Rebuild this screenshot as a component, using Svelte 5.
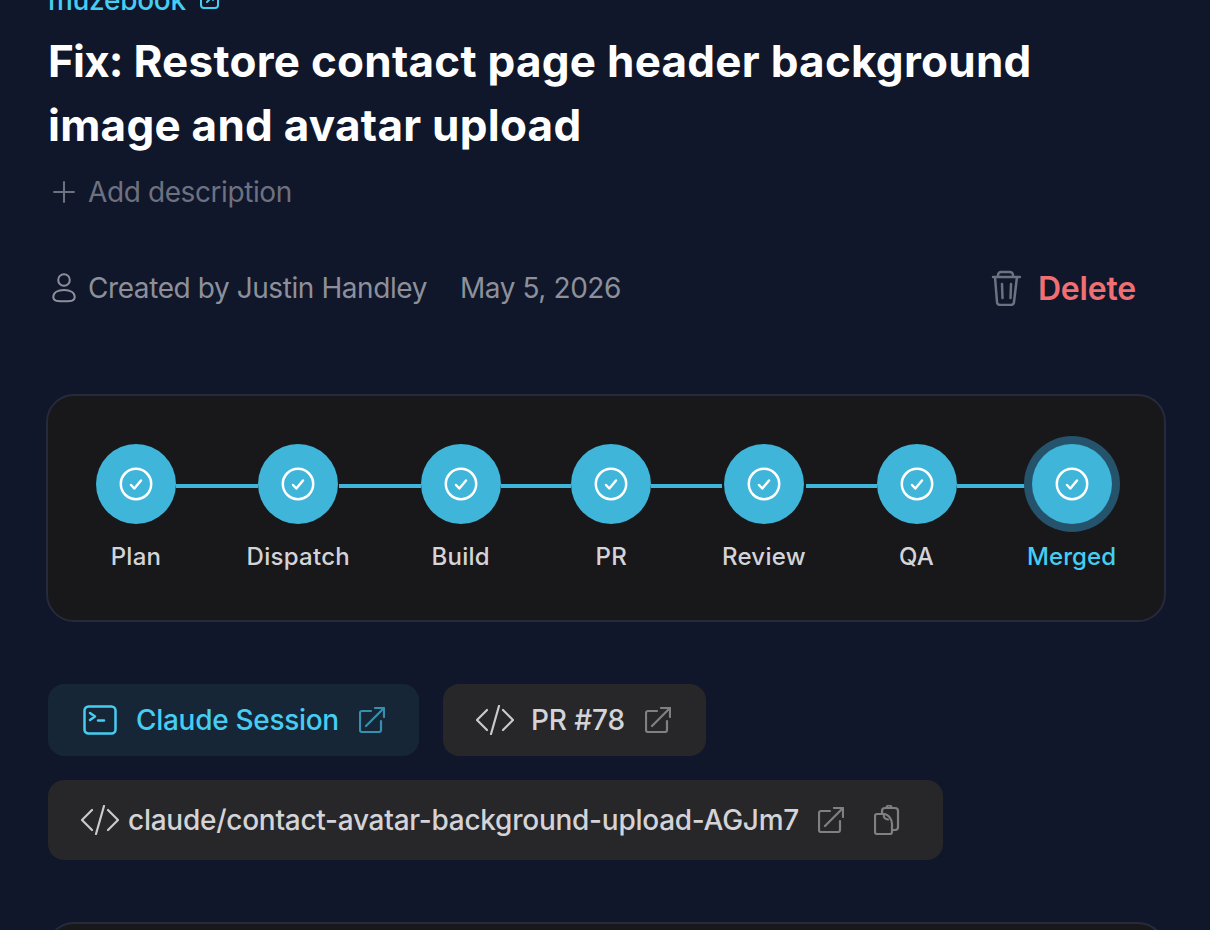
<script>
  const steps = [
    { label: 'Plan', over: 0 },
    { label: 'Dispatch', over: 11 },
    { label: 'Build', over: 0 },
    { label: 'PR', over: 0 },
    { label: 'Review', over: 0 },
    { label: 'QA', over: 0 },
    { label: 'Merged', over: 4, active: true }
  ];
</script>

{#snippet ext(cls)}
  <svg class={cls} width="26" height="26" viewBox="0 0 26 26" fill="none" stroke="currentColor" stroke-width="2.200" stroke-linecap="round" stroke-linejoin="round">
    <path d="M12 4H3a2 2 0 0 0-2 2v17a2 2 0 0 0 2 2h17a2 2 0 0 0 2-2v-9" />
    <path d="M7 19 25 1M16 1h9v9" />
  </svg>
{/snippet}

{#snippet code()}
  <svg class="code" width="38" height="30" viewBox="0 0 38 30" fill="none" stroke="currentColor" stroke-width="2.200" stroke-linecap="round" stroke-linejoin="round">
    <path d="M11 5 1 15l10 10M27 5l10 10-10 10M23 1l-8 28" />
  </svg>
{/snippet}

<main class="page">
  <a class="repo" href="#repo">
    <span>muzebook</span>
    <svg width="20" height="20" viewBox="0 0 20 20" fill="none" stroke="currentColor" stroke-width="2" stroke-linecap="round" stroke-linejoin="round">
      <rect x="1" y="1" width="17" height="17" rx="3" />
      <path d="M7 12 13 6M9 6h4v4" />
    </svg>
  </a>

  <h1><span class="fix">Fix:</span> Restore contact page header background<br />image and avatar upload</h1>

  <div class="add">
    <svg width="24" height="24" viewBox="0 0 24 24" fill="none" stroke="currentColor" stroke-width="2" stroke-linecap="round">
      <path d="M12 2v20M2 12h20" />
    </svg>
    <span>Add description</span>
  </div>

  <div class="meta">
    <svg class="person" width="24" height="30" viewBox="0 0 24 30" fill="none" stroke="currentColor" stroke-width="2">
      <circle cx="12" cy="7" r="5.800" />
      <path d="M1.300 24c0-4.500 4.500-7 10.700-7s10.700 2.500 10.700 7c0 2.500-1 3.200-3 3.700-2.300.4-5 .6-7.700.6s-5.400-.2-7.700-.6c-2-.5-3-1.200-3-3.700Z" />
    </svg>
    <span class="by">Created by Justin Handley</span>
    <span class="date">May 5, 2026</span>
    <div class="delete">
      <svg width="30" height="36" viewBox="0 0 30 36" fill="none" stroke="currentColor" stroke-width="2.500" stroke-linecap="round" stroke-linejoin="round">
        <path d="M2 7h27M7 7V5a3 3 0 0 1 3-3h9a3 3 0 0 1 3 3v2M4 7l2 25a3 3 0 0 0 3 3h11a3 3 0 0 0 3-3l3-25M11 14l.5 14M20 14l-.5 14" />
      </svg>
      <span>Delete</span>
    </div>
  </div>

  <section class="card stepper">
    {#each steps as s, i}
      {#if i > 0}
        <div class="gap">
          <div class="bar" style="margin-left:-{steps[i - 1].over}px;margin-right:-{s.over}px"></div>
        </div>
      {/if}
      <div class="step" class:active={s.active}>
        <div class="dot">
          <svg width="34" height="34" viewBox="0 0 34 34" fill="none" stroke="#fff" stroke-linecap="round" stroke-linejoin="round">
            <circle cx="17" cy="17" r="15.200" stroke-width="2.500" />
            <path d="M12 18l3.300 3.500 6.700-8" stroke-width="2.500" />
          </svg>
        </div>
        <div class="label">{s.label}</div>
      </div>
    {/each}
  </section>

  <div class="links">
    <a class="btn session" href="#session">
      <svg class="term" width="34" height="30" viewBox="0 0 34 30" fill="none" stroke="currentColor" stroke-width="2.500" stroke-linecap="round" stroke-linejoin="round">
        <rect x="1.500" y="1.500" width="31" height="27" rx="4" />
        <path d="M7 8l5 3.500-5 3.500M15 15.500h6" />
      </svg>
      <span>Claude Session</span>
      {@render ext('ext cyan')}
    </a>
    <a class="btn pr" href="#pr">
      {@render code()}
      <span>PR #78</span>
      {@render ext('ext')}
    </a>
  </div>

  <div class="btn branch">
    {@render code()}
    <span>claude/contact-avatar-background-upload-AGJm7</span>
    {@render ext('ext')}
    <svg class="copy" width="26" height="30" viewBox="0 0 26 30" fill="none" stroke="currentColor" stroke-width="2.200" stroke-linecap="round" stroke-linejoin="round">
      <path d="M8 8V6a3 3 0 0 1 3-3h1.500a2.500 2.500 0 0 1 5 0H21a3 3 0 0 1 3 3v16a3 3 0 0 1-3 3h-3" />
      <path d="M12.500 3h5" />
      <path d="M3 9h7c4 0 8 5 8 10v8a2 2 0 0 1-2 2H3a2 2 0 0 1-2-2V11a2 2 0 0 1 2-2Z" />
      <path d="M10 9c-1 3 .5 5 4 5.500" />
    </svg>
  </div>

  <section class="card next"></section>
</main>

<style>
  :global(body) {
    margin: 0;
    background: #10172a;
    overflow: hidden;
  }
  .page {
    height: 930px;
    overflow: hidden;
    box-sizing: border-box;
    padding: 0 44px 0 48px;
    font-family: Inter, "Liberation Sans", sans-serif;
  }
  a { text-decoration: none; }
  .repo {
    display: flex;
    align-items: center;
    gap: 14px;
    height: 40px;
    margin-top: -20px;
    color: #45cdf3;
    font-size: 28px;
    font-weight: 500;
    letter-spacing: -0.3px;
  }
  h1 {
    margin: 9px 0 0;
    color: #fff;
    font-size: 44px;
    line-height: 64px;
    font-weight: 700;
    letter-spacing: 0.26px;
  }
  .fix { letter-spacing: -0.8px; }
  .add {
    display: flex;
    align-items: center;
    gap: 12px;
    height: 40px;
    margin-top: 15px;
    padding-left: 4px;
    color: #6e7180;
    font-size: 28px;
    letter-spacing: -0.4px;
  }
  .meta {
    display: flex;
    align-items: center;
    height: 40px;
    margin-top: 56px;
    padding-left: 4px;
    color: #8d909b;
    font-size: 28px;
    letter-spacing: -0.42px;
  }
  .person { margin-right: 12px; }
  .date { margin-left: 33px; }
  .delete {
    display: flex;
    align-items: center;
    gap: 17px;
    margin-left: auto;
    padding-right: 30px;
    color: #6b7280;
  }
  .delete span {
    color: #f06f72;
    font-size: 32px;
    font-weight: 600;
    letter-spacing: -0.2px;
  }
  .card {
    margin-left: -2px;
    box-sizing: border-box;
    background: #18181b;
    border: 2px solid #262a3a;
    border-radius: 28px;
  }
  .stepper {
    display: flex;
    align-items: flex-start;
    margin-top: 86px;
    padding: 48px;
  }
  .step {
    display: flex;
    flex-direction: column;
    align-items: center;
    min-width: 80px;
  }
  .dot {
    position: relative;
    z-index: 1;
    display: flex;
    align-items: center;
    justify-content: center;
    width: 80px;
    height: 80px;
    border-radius: 50%;
    background: #3eb5d9;
  }
  .active .dot { box-shadow: 0 0 0 8px #25536b; }
  .label {
    margin-top: 17px;
    margin-bottom: -1px;
    color: #d4d4d8;
    font-size: 24px;
    line-height: 32px;
    font-weight: 550;
    letter-spacing: 0.28px;
  }
  .active .label { color: #45cdf3; letter-spacing: 0.05px; }
  .gap { flex: 1; padding-top: 40px; }
  .bar { height: 4px; background: #3eb5d9; }
  .links {
    display: flex;
    gap: 24px;
    margin-top: 62px;
  }
  .btn {
    display: inline-flex;
    align-items: center;
    height: 72px;
    box-sizing: border-box;
    border-radius: 16px;
    background: #27272a;
    color: #d4d4d8;
    font-size: 28px;
    font-weight: 550;
    letter-spacing: -0.26px;
  }
  .code { color: #c9c9ce; flex: none; }
  .ext { color: #808084; flex: none; margin-left: 20px; }
  .ext.cyan { color: #3690ad; }
  .session {
    padding: 0 34px 0 35px;
    background: #172636;
    color: #45cdf3;
    letter-spacing: -0.3px;
  }
  .term { margin-right: 19px; }
  .pr {
    padding: 0 35px 0 33px;
    letter-spacing: -0.1px;
  }
  .pr .code { margin-right: 17px; }
  .branch {
    display: flex;
    width: fit-content;
    height: 80px;
    margin-top: 24px;
    padding: 0 43px 0 33px;
  }
  .branch .code { margin-right: 9px; }
  .branch .ext { margin-left: 19px; }
  .copy { color: #808084; margin-left: 30px; }
  .next {
    height: 200px;
    margin-top: 62px;
  }
</style>
